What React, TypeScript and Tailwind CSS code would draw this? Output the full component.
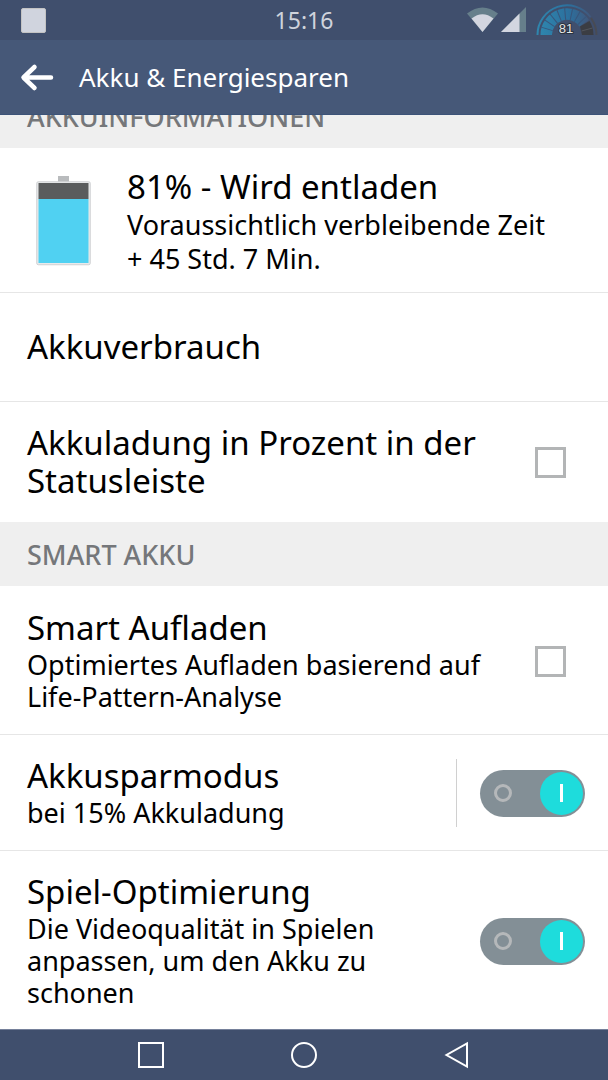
import { useState } from "react"
import type { ReactNode } from "react"

interface SectionTitleProps {
  children: ReactNode
}

function SectionTitle({ children }: SectionTitleProps) {
  return (
    <h2 className="flex h-16 shrink-0 items-center bg-[#efefef] px-[27px] pt-0.5 text-[27px] leading-8 font-medium text-[#75777a]">
      {children}
    </h2>
  )
}

interface ToggleProps {
  id: string
  checked: boolean
  onChange: (checked: boolean) => void
}

function CheckBox({ id, checked, onChange }: ToggleProps) {
  return (
    <input
      id={id}
      type="checkbox"
      checked={checked}
      onChange={(e) => onChange(e.target.checked)}
      className="mr-[15px] size-[31px] shrink-0 appearance-none border-3 border-[#b3b5b6] bg-white checked:bg-[#1edcdc]"
    />
  )
}

function Switch({ id, checked, onChange }: ToggleProps) {
  return (
    <span className="relative block h-[47px] w-[105px] shrink-0">
      <input
        id={id}
        type="checkbox"
        role="switch"
        checked={checked}
        onChange={(e) => onChange(e.target.checked)}
        className="peer block h-full w-full appearance-none rounded-full bg-[#838f96]"
      />
      <span className="pointer-events-none absolute top-[14px] left-[14px] size-[18px] rounded-full border-3 border-[#b5b8ba]" />
      <span className="pointer-events-none absolute top-[2px] left-[2px] flex size-[43px] items-center justify-center rounded-full bg-[#b5b8ba] peer-checked:right-[2px] peer-checked:left-auto peer-checked:bg-[#1edcdc]">
        <span className="h-[18px] w-[3px] bg-white" />
      </span>
    </span>
  )
}

function BatteryIcon() {
  return (
    <svg width="56" height="92" viewBox="0 0 56 92" aria-hidden="true">
      <rect x="22" y="0" width="11" height="6" fill="#b9bbbd" />
      <rect x="0.75" y="5.75" width="53.5" height="83" rx="1.5" fill="#e9eaeb" stroke="#cfd1d3" strokeWidth="1" />
      <rect x="2.5" y="7" width="50" height="16" fill="#5a5c5d" />
      <rect x="2.5" y="23" width="50" height="64" fill="#50d1f2" />
    </svg>
  )
}

function GaugeIcon() {
  const ticks = [17, 34, 51, 68, 85, 102, 119, 136]
  return (
    <svg width="62" height="32" viewBox="0 0 62 32" aria-hidden="true">
      <defs>
        <linearGradient id="gauge" x1="0" x2="1" y1="0" y2="0">
          <stop offset="0" stopColor="#2e86ae" />
          <stop offset="0.6" stopColor="#2c6f9d" />
          <stop offset="1" stopColor="#41587c" />
        </linearGradient>
      </defs>
      <path d="M1.500 31A29.500 29.500 0 0 1 54.500 13" fill="none" stroke="url(#gauge)" strokeWidth="2" />
      <path d="M4.500 31A26.500 26.500 0 0 1 53 16L43.500 22.500A15 15 0 0 0 16 31Z" fill="url(#gauge)" />
      {ticks.map((angle) => (
        <path key={angle} d="M4 31H16" stroke="#38557b" strokeWidth="1" transform={`rotate(${angle} 31 31)`} />
      ))}
      <path d="M55 14A29.500 29.500 0 0 1 60.500 31" fill="none" stroke="#484b54" strokeWidth="2" />
      <path d="M44 22.500L53.500 17A26.500 26.500 0 0 1 57.500 31H46Z" fill="#3b3d43" />
      <path d="M45.500 27L56.500 24" stroke="#53565d" strokeWidth="1" />
      <text
        x="30"
        y="29"
        textAnchor="middle"
        className="fill-[#e6e6e6] stroke-[#2b3340] stroke-2 font-['Liberation_Sans',sans-serif] text-[13px] [paint-order:stroke]"
      >
        81
      </text>
    </svg>
  )
}

function StatusBar() {
  return (
    <div className="grid h-10 shrink-0 grid-cols-3 items-center bg-[#404f6d] text-[#cfd3dc]">
      <div className="pl-[21px]">
        <div className="size-[25px] rounded-xs border border-[#c3c3c3] bg-[#d0d4de]" />
      </div>
      <time className="text-center text-[23px] leading-8">15:16</time>
      <div className="flex items-center justify-end pr-[10px]">
        <svg width="32" height="26" viewBox="0 0 32 26" aria-hidden="true">
          <path d="M0 6.500Q15.500 -5.500 31 6.500L15.500 25Z" fill="#667f8b" />
          <path d="M4.500 11.500Q15.500 3 26.500 11.500L15.500 25Z" fill="#d3d6e0" />
        </svg>
        <svg className="ml-[2px]" width="26" height="26" viewBox="0 0 26 26" aria-hidden="true">
          <path d="M25 0V25H0Z" fill="#667f8b" />
          <path d="M18.500 6.500V25H0Z" fill="#d3d6e0" />
        </svg>
        <div className="ml-[9px]">
          <GaugeIcon />
        </div>
      </div>
    </div>
  )
}

function NavigationBar() {
  return (
    <nav className="flex h-[51px] shrink-0 items-center justify-between border-t border-[#75809a] bg-[#404f6d] px-[135px]">
      <button type="button" aria-label="Letzte Apps" className="flex size-8 items-center justify-center">
        <svg width="28" height="28" viewBox="0 0 28 28" fill="none" stroke="white" strokeWidth="2">
          <rect x="2" y="2" width="24" height="24" />
        </svg>
      </button>
      <button type="button" aria-label="Startseite" className="flex size-8 items-center justify-center">
        <svg width="28" height="28" viewBox="0 0 28 28" fill="none" stroke="white" strokeWidth="2">
          <circle cx="14" cy="14" r="12" />
        </svg>
      </button>
      <button type="button" aria-label="Zurück" className="flex size-8 items-center justify-center">
        <svg width="28" height="28" viewBox="0 0 28 28" fill="none" stroke="white" strokeWidth="2">
          <path d="M24 2.500V25.500L3.500 14Z" />
        </svg>
      </button>
    </nav>
  )
}

export default function App() {
  const [showPercent, setShowPercent] = useState(false)
  const [smartCharging, setSmartCharging] = useState(false)
  const [powerSaving, setPowerSaving] = useState(true)
  const [gameOptimization, setGameOptimization] = useState(true)

  const title = "block text-[33px] leading-[38px]"
  const summary = "mt-0.5 block text-[27px] leading-8"

  return (
    <div className="flex min-h-screen flex-col bg-white font-['Noto_Sans',sans-serif] text-black">
      <StatusBar />

      <header className="z-10 flex h-[75px] shrink-0 items-center border-b border-[#3c5378] bg-[#465878] text-white">
        <button type="button" aria-label="Zurück" className="ml-5">
          <svg width="35" height="30" viewBox="0 0 35 30" fill="none" stroke="white" strokeWidth="4.500" strokeLinecap="round" strokeLinejoin="round">
            <path d="M31 15.500H4M14.500 5L3.500 15.500L14.500 26" />
          </svg>
        </button>
        <h1 className="ml-6 text-[26px] leading-9">Akku &amp; Energiesparen</h1>
      </header>

      <main className="flex flex-1 flex-col">
        {/* First heading is partly scrolled under the header */}
        <div className="-mt-[31px]">
          <SectionTitle>AKKUINFORMATIONEN</SectionTitle>
        </div>

        <div className="flex items-center border-b border-[#e6e6e6] pt-5 pr-6 pb-4 pl-9">
          <BatteryIcon />
          <div className="ml-[35px]">
            <p className={title}>81% - Wird entladen</p>
            <p className="mt-0.5 text-[27px] leading-[34px]">
              Voraussichtlich verbleibende Zeit
              <br />+ 45 Std. 7 Min.
            </p>
          </div>
        </div>

        <a href="#akkuverbrauch" className="block border-b border-[#e6e6e6] px-[27px] py-[35px]">
          <span className={title}>Akkuverbrauch</span>
        </a>

        <div className="flex items-center justify-between px-[27px] py-[22px]">
          <label htmlFor="percent" className={title}>
            Akkuladung in Prozent in der
            <br />
            Statusleiste
          </label>
          <CheckBox id="percent" checked={showPercent} onChange={setShowPercent} />
        </div>

        <SectionTitle>SMART AKKU</SectionTitle>

        <div className="flex items-center justify-between border-b border-[#e6e6e6] px-[27px] pt-[23px] pb-[21px]">
          <label htmlFor="charging">
            <span className={title}>Smart Aufladen</span>
            <span className={summary}>
              Optimiertes Aufladen basierend auf
              <br />
              Life-Pattern-Analyse
            </span>
          </label>
          <CheckBox id="charging" checked={smartCharging} onChange={setSmartCharging} />
        </div>

        <div className="flex items-center border-b border-[#e6e6e6] pt-[22px] pr-[23px] pb-[21px] pl-[27px]">
          <label htmlFor="saving" className="flex-1">
            <span className={title}>Akkusparmodus</span>
            <span className={summary}>bei 15% Akkuladung</span>
          </label>
          <div className="flex h-[68px] items-center border-l border-[#d0d0d0] pl-[23px]">
            <Switch id="saving" checked={powerSaving} onChange={setPowerSaving} />
          </div>
        </div>

        <div className="flex items-center justify-between pt-[22px] pr-[23px] pb-5 pl-[27px]">
          <label htmlFor="games">
            <span className={title}>Spiel-Optimierung</span>
            <span className={summary}>
              Die Videoqualität in Spielen
              <br />
              anpassen, um den Akku zu
              <br />
              schonen
            </span>
          </label>
          <Switch id="games" checked={gameOptimization} onChange={setGameOptimization} />
        </div>
      </main>

      <NavigationBar />
    </div>
  )
}
